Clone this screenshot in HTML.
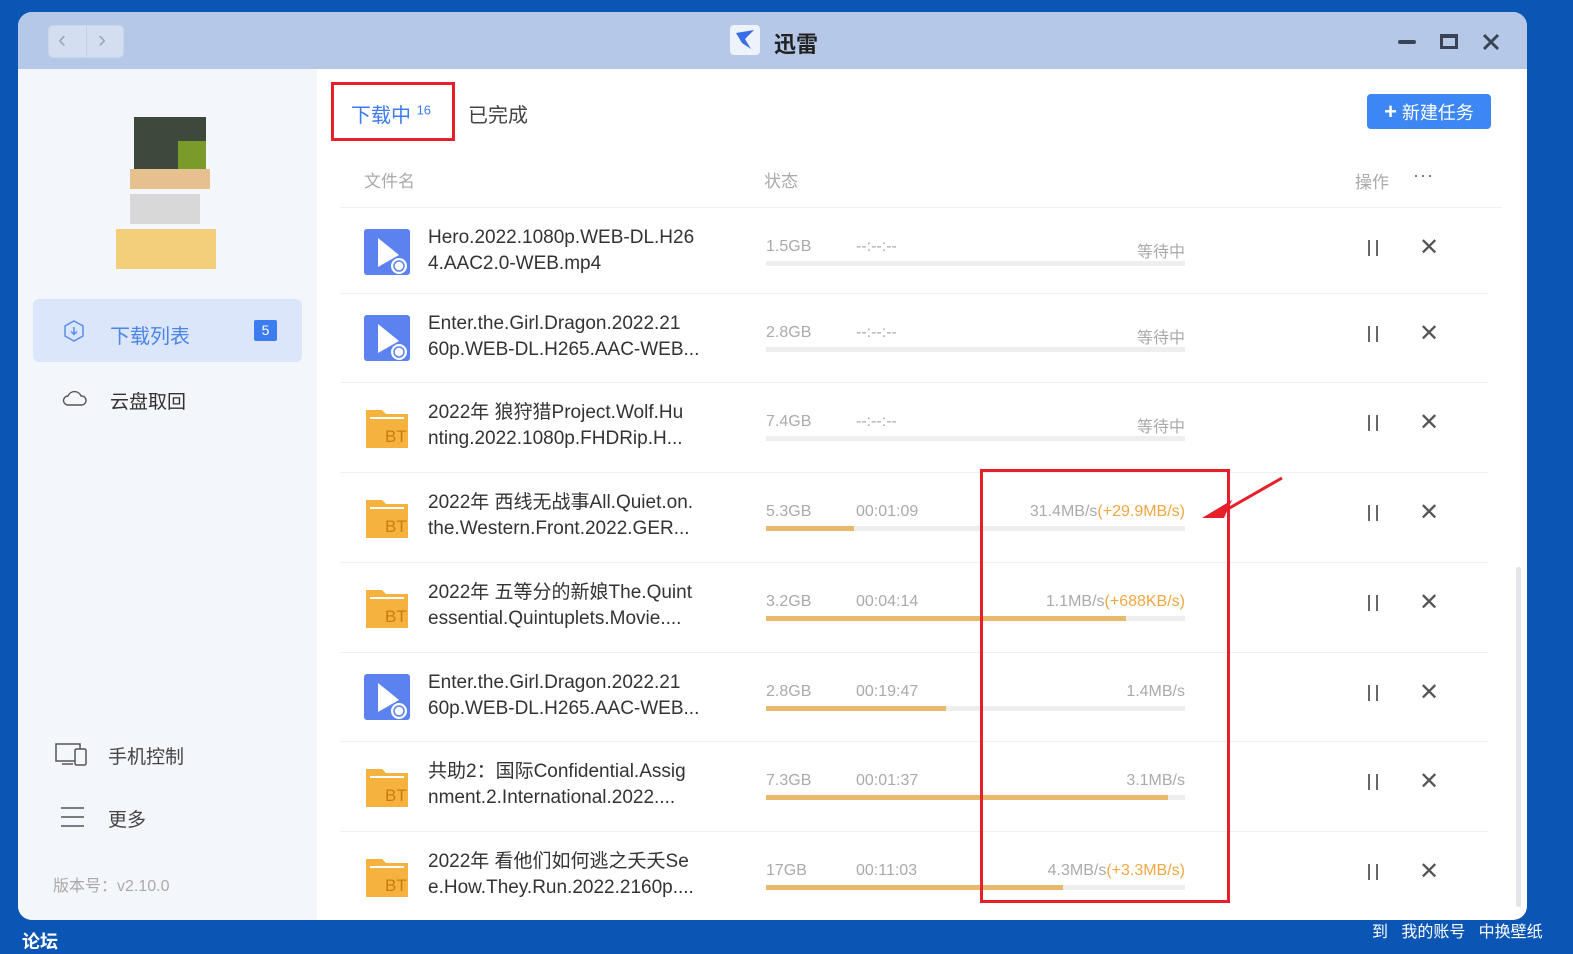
<!DOCTYPE html>
<html><head><meta charset="utf-8"><style>
*{margin:0;padding:0;box-sizing:border-box}
body{width:1573px;height:944px;overflow:hidden;background:#0b55b5;font-family:"Liberation Sans","Noto Sans CJK SC",sans-serif;position:relative}
.a{position:absolute}
.win{left:18px;top:12px;width:1509px;height:908px;background:#fff;border-radius:14px;overflow:hidden}
.title{left:0;top:0;width:1509px;height:57px;background:#b5c8e8}
.side{left:0;top:57px;width:299px;height:851px;background:#f3f6fa}
.row{left:322px;width:1148px;height:90px;border-top:1px solid #eef0f3}
.nm{left:88px;top:17px;font-size:19px;line-height:26px;color:#333;width:290px}
.sz{left:426px;top:30px;font-size:16px;color:#aaa}
.tm{left:516px;top:30px;font-size:16px;color:#aaa}
.sp{top:30px;font-size:16px;color:#aaa;text-align:right}
.bar{left:426px;top:53px;width:419px;height:5px;background:#eeeeee}
.bar i{display:block;height:5px;background:#e8b96a}
.ic{left:24px;top:21px;width:46px;height:46px}
.pz{left:1028px;top:32px;width:10px;height:16px;border-left:2px solid #666;border-right:2px solid #666}
.xx{left:1079px;top:29px;font-size:24px;color:#555;line-height:22px}
</style></head><body>
<div class="a win">
 <div class="a title">
  <div class="a" style="left:30px;top:13px;width:76px;height:33px;background:#d3def0;border-radius:5px;border:1px solid #c9d6ea"></div>
  <div class="a" style="left:40px;top:14px;font-size:24px;color:#9aa8bd">&#8249;</div>
  <div class="a" style="left:68px;top:14px;width:1px;height:31px;background:#c4d0e3"></div>
  <div class="a" style="left:80px;top:14px;font-size:24px;color:#9aa8bd">&#8250;</div>
  <div class="a" style="left:712px;top:13px;width:30px;height:30px;background:#eef2fa;border-radius:4px"><svg width="30" height="30"><path d="M6 8 L24 5 L15 14 L21 24 L12 18 Z" fill="#3a6ee8"/></svg></div>
  <div class="a" style="left:756px;top:15px;font-size:22px;font-weight:bold;color:#222">迅雷</div>
  <div class="a" style="left:1380px;top:28px;width:18px;height:4px;background:#3a4355;border-radius:2px"></div>
  <div class="a" style="left:1422px;top:22px;width:18px;height:15px;border:3px solid #3a4355;border-top-width:4px"></div>
  <svg class="a" style="left:1464px;top:21px" width="18" height="18"><path d="M2 2L16 16M16 2L2 16" stroke="#3a4355" stroke-width="3"/></svg>
 </div>
 <div class="a side">
  <div class="a" style="left:116px;top:48px;width:72px;height:72px;background:#1d2a1a;opacity:.85"></div>
  <div class="a" style="left:160px;top:72px;width:28px;height:28px;background:#7a9a2a"></div>
  <div class="a" style="left:112px;top:100px;width:80px;height:20px;background:#e7c08f"></div>
  <div class="a" style="left:112px;top:125px;width:70px;height:30px;background:#d8d8d8"></div>
  <div class="a" style="left:98px;top:160px;width:100px;height:40px;background:#f3cf7c"></div>
  <div class="a" style="left:15px;top:230px;width:269px;height:63px;background:#dbe6fa;border-radius:6px"></div>
  <svg class="a" style="left:44px;top:250px" width="24" height="24"><path d="M12 2L21 7V17L12 22L3 17V7Z" fill="none" stroke="#5b8ef0" stroke-width="1.5"/><path d="M12 8V15M9 12.5L12 15.5L15 12.5" fill="none" stroke="#5b8ef0" stroke-width="1.5"/></svg>
  <div class="a" style="left:92px;top:251px;font-size:20px;color:#4b86e8">下载列表</div>
  <div class="a" style="left:236px;top:251px;width:23px;height:21px;background:#3d7cf0;border-radius:2px;color:#fff;font-size:14px;text-align:center;line-height:21px">5</div>
  <svg class="a" style="left:44px;top:318px" width="26" height="22"><path d="M6 18H20A4.5 4.5 0 0 0 19 9A7 7 0 0 0 6 9A4.5 4.5 0 0 0 6 18Z" fill="none" stroke="#555" stroke-width="1.4"/></svg>
  <div class="a" style="left:92px;top:318px;font-size:19px;color:#333">云盘取回</div>
  <svg class="a" style="left:37px;top:672px" width="34" height="26"><rect x="1" y="3" width="24" height="17" fill="none" stroke="#555" stroke-width="1.5"/><rect x="20" y="8" width="11" height="16" rx="1.5" fill="#f3f6fa" stroke="#555" stroke-width="1.5"/><path d="M7 23H18" stroke="#555" stroke-width="1.5"/></svg>
  <div class="a" style="left:90px;top:673px;font-size:19px;color:#444">手机控制</div>
  <svg class="a" style="left:42px;top:737px" width="26" height="22"><path d="M1 2H24M1 11H24M1 20H24" stroke="#555" stroke-width="1.5"/></svg>
  <div class="a" style="left:90px;top:736px;font-size:19px;color:#444">更多</div>
  <div class="a" style="left:35px;top:803px;font-size:16px;color:#aaa">版本号：v2.10.0</div>
 </div>
 <div class="a" style="left:313px;top:70px;width:124px;height:59px;border:3px solid #e5202a"></div>
 <div class="a" style="left:333px;top:87px;font-size:20px;color:#3d7cf0">下载中 <sup style="font-size:13px">16</sup></div>
 <div class="a" style="left:450px;top:87px;font-size:20px;color:#444">已完成</div>
 <div class="a" style="left:1349px;top:82px;width:124px;height:35px;background:#3d87f5;border-radius:4px;color:#fff;font-size:18px;line-height:35px;text-align:center"><b style="font-size:22px">+</b> 新建任务</div>
 <div class="a" style="left:346px;top:155px;font-size:17px;color:#aaa">文件名</div>
 <div class="a" style="left:746px;top:155px;font-size:17px;color:#aaa">状态</div>
 <div class="a" style="left:1337px;top:156px;font-size:17px;color:#aaa">操作</div>
 <div class="a" style="left:1395px;top:153px;font-size:18px;color:#666;letter-spacing:1px">···</div>
 <div class="a" style="left:322px;top:195px;width:1162px;height:1px;background:#eef0f3"></div>

 <!-- rows -->
 <div class="a row" style="top:196px;border-top:none">
  <svg class="a ic" viewBox="0 0 46 46"><rect width="46" height="46" rx="3" fill="#5b82ef"/><path d="M14 9L35 26L14 38Z" fill="#fff"/><circle cx="35" cy="37" r="8" fill="#fff"/><circle cx="35" cy="37" r="5" fill="none" stroke="#5b82ef" stroke-width="1.5"/></svg>
  <div class="a nm">Hero.2022.1080p.WEB-DL.H26<br>4.AAC2.0-WEB.mp4</div>
  <div class="a sz">1.5GB</div><div class="a tm">--:--:--</div><div class="a sp" style="right:303px">等待中</div>
  <div class="a bar"><i style="width:0"></i></div><div class="a pz"></div><div class="a xx">✕</div>
 </div>
 <div class="a row" style="top:281px">
  <svg class="a ic" viewBox="0 0 46 46"><rect width="46" height="46" rx="3" fill="#5b82ef"/><path d="M14 9L35 26L14 38Z" fill="#fff"/><circle cx="35" cy="37" r="8" fill="#fff"/><circle cx="35" cy="37" r="5" fill="none" stroke="#5b82ef" stroke-width="1.5"/></svg>
  <div class="a nm">Enter.the.Girl.Dragon.2022.21<br>60p.WEB-DL.H265.AAC-WEB...</div>
  <div class="a sz">2.8GB</div><div class="a tm">--:--:--</div><div class="a sp" style="right:303px">等待中</div>
  <div class="a bar"></div><div class="a pz"></div><div class="a xx">✕</div>
 </div>
 <div class="a row" style="top:370px">
  <svg class="a ic" viewBox="0 0 46 46"><path d="M2 6H18L22 10H44V44H2Z" fill="#f6b23e"/><rect x="6" y="13" width="34" height="2" fill="#fff"/><text x="21" y="38" font-size="17" fill="#c77d10" font-family="Liberation Sans,sans-serif">BT</text></svg>
  <div class="a nm">2022年 狼狩猎Project.Wolf.Hu<br>nting.2022.1080p.FHDRip.H...</div>
  <div class="a sz">7.4GB</div><div class="a tm">--:--:--</div><div class="a sp" style="right:303px">等待中</div>
  <div class="a bar"></div><div class="a pz"></div><div class="a xx">✕</div>
 </div>
 <div class="a row" style="top:460px">
  <svg class="a ic" viewBox="0 0 46 46"><path d="M2 6H18L22 10H44V44H2Z" fill="#f6b23e"/><rect x="6" y="13" width="34" height="2" fill="#fff"/><text x="21" y="38" font-size="17" fill="#c77d10" font-family="Liberation Sans,sans-serif">BT</text></svg>
  <div class="a nm">2022年 西线无战事All.Quiet.on.<br>the.Western.Front.2022.GER...</div>
  <div class="a sz">5.3GB</div><div class="a tm">00:01:09</div><div class="a sp" style="right:303px">31.4MB/s<span style="color:#f0a742">(+29.9MB/s)</span></div>
  <div class="a bar"><i style="width:88px"></i></div><div class="a pz"></div><div class="a xx">✕</div>
 </div>
 <div class="a row" style="top:550px">
  <svg class="a ic" viewBox="0 0 46 46"><path d="M2 6H18L22 10H44V44H2Z" fill="#f6b23e"/><rect x="6" y="13" width="34" height="2" fill="#fff"/><text x="21" y="38" font-size="17" fill="#c77d10" font-family="Liberation Sans,sans-serif">BT</text></svg>
  <div class="a nm">2022年 五等分的新娘The.Quint<br>essential.Quintuplets.Movie....</div>
  <div class="a sz">3.2GB</div><div class="a tm">00:04:14</div><div class="a sp" style="right:303px">1.1MB/s<span style="color:#f0a742">(+688KB/s)</span></div>
  <div class="a bar"><i style="width:360px"></i></div><div class="a pz"></div><div class="a xx">✕</div>
 </div>
 <div class="a row" style="top:640px">
  <svg class="a ic" viewBox="0 0 46 46"><rect width="46" height="46" rx="3" fill="#5b82ef"/><path d="M14 9L35 26L14 38Z" fill="#fff"/><circle cx="35" cy="37" r="8" fill="#fff"/><circle cx="35" cy="37" r="5" fill="none" stroke="#5b82ef" stroke-width="1.5"/></svg>
  <div class="a nm">Enter.the.Girl.Dragon.2022.21<br>60p.WEB-DL.H265.AAC-WEB...</div>
  <div class="a sz">2.8GB</div><div class="a tm">00:19:47</div><div class="a sp" style="right:303px">1.4MB/s</div>
  <div class="a bar"><i style="width:180px"></i></div><div class="a pz"></div><div class="a xx">✕</div>
 </div>
 <div class="a row" style="top:729px">
  <svg class="a ic" viewBox="0 0 46 46"><path d="M2 6H18L22 10H44V44H2Z" fill="#f6b23e"/><rect x="6" y="13" width="34" height="2" fill="#fff"/><text x="21" y="38" font-size="17" fill="#c77d10" font-family="Liberation Sans,sans-serif">BT</text></svg>
  <div class="a nm">共助2：国际Confidential.Assig<br>nment.2.International.2022....</div>
  <div class="a sz">7.3GB</div><div class="a tm">00:01:37</div><div class="a sp" style="right:303px">3.1MB/s</div>
  <div class="a bar"><i style="width:402px"></i></div><div class="a pz"></div><div class="a xx">✕</div>
 </div>
 <div class="a row" style="top:819px">
  <svg class="a ic" viewBox="0 0 46 46"><path d="M2 6H18L22 10H44V44H2Z" fill="#f6b23e"/><rect x="6" y="13" width="34" height="2" fill="#fff"/><text x="21" y="38" font-size="17" fill="#c77d10" font-family="Liberation Sans,sans-serif">BT</text></svg>
  <div class="a nm">2022年 看他们如何逃之夭夭Se<br>e.How.They.Run.2022.2160p....</div>
  <div class="a sz">17GB</div><div class="a tm">00:11:03</div><div class="a sp" style="right:303px">4.3MB/s<span style="color:#f0a742">(+3.3MB/s)</span></div>
  <div class="a bar"><i style="width:297px"></i></div><div class="a pz"></div><div class="a xx">✕</div>
 </div>
 <div class="a" style="left:1498px;top:555px;width:5px;height:340px;background:#e2e4e8;border-radius:3px"></div>
 <div class="a" style="left:962px;top:457px;width:250px;height:434px;border:3px solid #e5202a"></div>
 <svg class="a" style="left:1180px;top:462px" width="90" height="50"><path d="M84 4L28 36" stroke="#e5202a" stroke-width="3"/><path d="M4 44L34 26L26 44Z" fill="#e5202a"/></svg>
</div>
<div class="a" style="left:1372px;top:918px;font-size:16px;color:#fff">到 &nbsp; 我的账号 &nbsp; 中换壁纸</div>
<div class="a" style="left:22px;top:928px;font-size:18px;font-weight:bold;color:#fff">论坛</div>
</body></html>
